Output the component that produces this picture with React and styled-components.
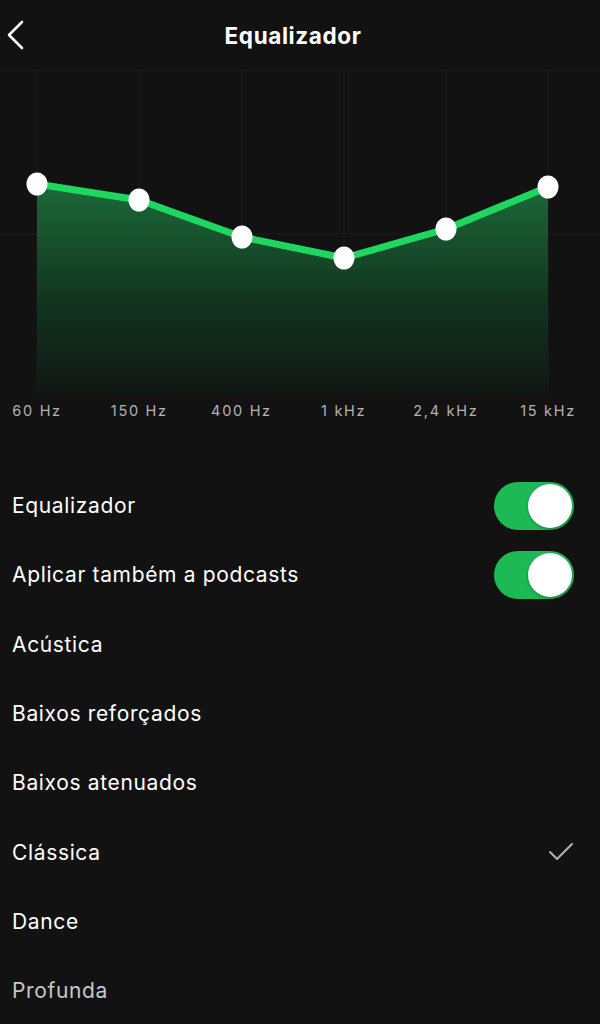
import React from "react";
import styled, { createGlobalStyle } from "styled-components";

const GlobalStyle = createGlobalStyle`
  html, body {
    margin: 0;
    padding: 0;
    background: #121212;
  }
  body {
    font-family: "Inter", "Liberation Sans", sans-serif;
    color: #ffffff;
  }
`;

const Screen = styled.div`
  width: 600px;
  height: 1024px;
  overflow: hidden;
  background: #121212;
`;

const Header = styled.header`
  height: 70px;
  display: grid;
  grid-template-columns: 60px 1fr 74px;
  align-items: center;
`;

const BackButton = styled.button`
  background: none;
  border: 0;
  padding: 0 0 0 6px;
  height: 40px;
  display: flex;
  align-items: center;
  cursor: pointer;
`;

const Title = styled.h1`
  margin: 0;
  text-align: center;
  font-family: "Inter", "Liberation Sans", sans-serif;
  font-size: 22.5px;
  font-weight: 700;
  letter-spacing: 0.6px;
  color: #ffffff;
`;

const Chart = styled.svg`
  display: block;
  width: 600px;
  height: 325px;
`;

const Labels = styled.div`
  display: grid;
  grid-template-columns: repeat(6, 102.2px);
  margin-left: -14px;
  height: 30px;
  align-items: center;
`;

const Freq = styled.span`
  text-align: center;
  font-family: "Inter", "Liberation Sans", sans-serif;
  font-size: 14.5px;
  letter-spacing: 1.7px;
  color: #b3b3b3;
`;

const List = styled.ul`
  list-style: none;
  margin: 46px 0 0;
  padding: 0 26px 0 12px;
`;

const Row = styled.li`
  height: 69.3px;
  display: flex;
  align-items: center;
  justify-content: space-between;
  font-size: 21px;
  letter-spacing: 0.65px;
  color: ${(p) => (p.$dim ? "#c8c8c8" : "#ffffff")};
`;

const Toggle = styled.div`
  width: 80px;
  height: 48px;
  border-radius: 24px;
  background: #1db954;
  padding: 2px;
  box-sizing: border-box;
  display: flex;
  justify-content: flex-end;

  span {
    width: 44px;
    height: 44px;
    border-radius: 50%;
    background: #ffffff;
    box-shadow: 0 1px 3px rgba(0, 0, 0, 0.35);
  }
`;

const bands = [
  { label: "60 Hz", x: 37, y: 114 },
  { label: "150 Hz", x: 139, y: 130 },
  { label: "400 Hz", x: 242, y: 167 },
  { label: "1 kHz", x: 344, y: 188 },
  { label: "2,4 kHz", x: 446, y: 159 },
  { label: "15 kHz", x: 548, y: 117 },
];

const presets = [
  { name: "Acústica" },
  { name: "Baixos reforçados" },
  { name: "Baixos atenuados" },
  { name: "Clássica", checked: true },
  { name: "Dance" },
  { name: "Profunda", dim: true },
];

const EqChart = () => {
  const line = bands.map((b) => `${b.x},${b.y}`).join(" ");
  const area = `37,325 ${line} 548,325`;
  return (
    <Chart viewBox="0 0 600 325">
      <defs>
        <linearGradient id="fill" x1="0" y1="0" x2="0" y2="1">
          <stop offset="0" stopColor="#1c6a39" />
          <stop offset="0.55" stopColor="#12351f" />
          <stop offset="1" stopColor="#101613" />
        </linearGradient>
      </defs>
      <line x1="0" y1="0.5" x2="600" y2="0.5" stroke="#1b1b1b" />
      <line x1="0" y1="164" x2="600" y2="164" stroke="#1b1b1b" />
      {bands.map((b) => (
        <line key={b.label} x1={b.x} y1="0" x2={b.x} y2="325" stroke="#1b1b1b" />
      ))}
      <polygon points={area} fill="url(#fill)" />
      <polyline
        points={line}
        fill="none"
        stroke="#1ed760"
        strokeWidth="7"
        strokeLinejoin="round"
      />
      {bands.map((b) => (
        <ellipse key={b.label} cx={b.x} cy={b.y} rx="10.5" ry="11.5" fill="#ffffff" />
      ))}
    </Chart>
  );
};

const App = () => {
  return (
    <Screen>
      <GlobalStyle />
      <Header>
        <BackButton aria-label="Voltar">
          <svg width="20" height="30" viewBox="0 0 20 30">
            <polyline
              points="16,2 3,15 16,28"
              fill="none"
              stroke="#ffffff"
              strokeWidth="2.6"
              strokeLinecap="round"
              strokeLinejoin="round"
            />
          </svg>
        </BackButton>
        <Title>Equalizador</Title>
        <span />
      </Header>
      <EqChart />
      <Labels>
        {bands.map((b) => (
          <Freq key={b.label}>{b.label}</Freq>
        ))}
      </Labels>
      <List>
        <Row>
          Equalizador
          <Toggle>
            <span />
          </Toggle>
        </Row>
        <Row>
          Aplicar também a podcasts
          <Toggle>
            <span />
          </Toggle>
        </Row>
        {presets.map((p) => (
          <Row key={p.name} $dim={p.dim}>
            {p.name}
            {p.checked && (
              <svg width="26" height="20" viewBox="0 0 26 20">
                <polyline
                  points="2,10 9,17 24,2"
                  fill="none"
                  stroke="#b3b3b3"
                  strokeWidth="2"
                  strokeLinecap="round"
                  strokeLinejoin="round"
                />
              </svg>
            )}
          </Row>
        ))}
      </List>
    </Screen>
  );
};

export default App;
